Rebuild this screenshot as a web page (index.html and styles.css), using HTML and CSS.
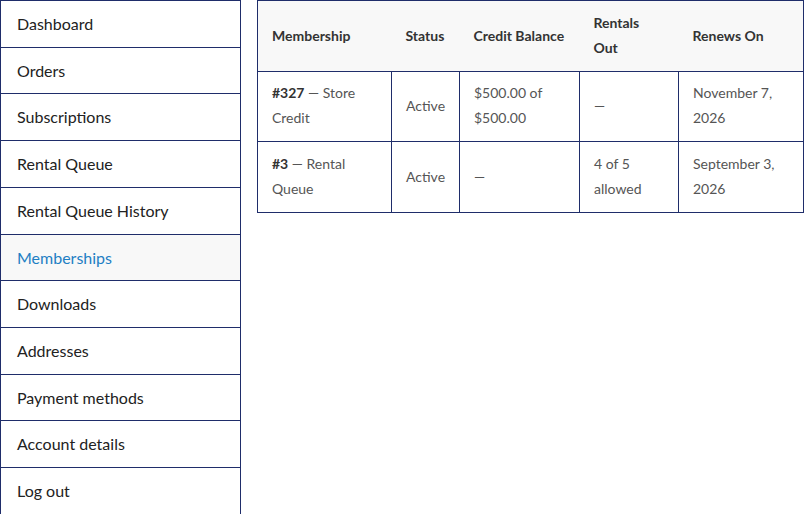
FILE: index.html
```html
<!DOCTYPE html>
<html>
<head>
<meta charset="utf-8">
<link rel="stylesheet" href="styles.css">
</head>
<body>
<div class="account">
  <nav class="nav">
    <ul class="nav-list">
      <li class="nav-item"><a href="#">Dashboard</a></li>
      <li class="nav-item"><a href="#">Orders</a></li>
      <li class="nav-item"><a href="#">Subscriptions</a></li>
      <li class="nav-item"><a href="#">Rental Queue</a></li>
      <li class="nav-item"><a href="#">Rental Queue History</a></li>
      <li class="nav-item is-active"><a href="#">Memberships</a></li>
      <li class="nav-item"><a href="#">Downloads</a></li>
      <li class="nav-item"><a href="#">Addresses</a></li>
      <li class="nav-item"><a href="#">Payment methods</a></li>
      <li class="nav-item"><a href="#">Account details</a></li>
      <li class="nav-item"><a href="#">Log out</a></li>
    </ul>
  </nav>
  <main class="content">
    <table class="members">
      <colgroup>
        <col class="c1"><col class="c2"><col class="c3"><col class="c4"><col class="c5">
      </colgroup>
      <thead>
        <tr>
          <th>Membership</th>
          <th>Status</th>
          <th>Credit Balance</th>
          <th>Rentals Out</th>
          <th>Renews On</th>
        </tr>
      </thead>
      <tbody>
        <tr>
          <td><strong>#327</strong> — Store Credit</td>
          <td>Active</td>
          <td>$500.00 of $500.00</td>
          <td>—</td>
          <td>November 7, 2026</td>
        </tr>
        <tr class="last-row">
          <td><strong>#3</strong> — Rental Queue</td>
          <td>Active</td>
          <td>—</td>
          <td>4 of 5 allowed</td>
          <td>September 3, 2026</td>
        </tr>
      </tbody>
    </table>
  </main>
</div>
</body>
</html>
```
FILE: styles.css
```css
html, body {
  margin: 0;
  padding: 0;
  background: #fff;
}
body {
  font-family: Lato, "Liberation Sans", sans-serif;
  color: #333;
}
.account {
  display: flex;
  align-items: flex-start;
  gap: 16px;
}
.nav {
  width: 241px;
  flex: none;
}
.nav-list {
  list-style: none;
  margin: 0;
  padding: 0;
  border-left: 1px solid #1f2d6a;
  border-right: 1px solid #1f2d6a;
}
.nav-item {
  border-top: 1px solid #1f2d6a;
}
.nav-item a {
  display: block;
  padding: 12px 16px 12px 16px;
  line-height: 21.7px;
  font-size: 16px;
  color: #222;
  text-decoration: none;
}
.nav-item.is-active a {
  background: #f8f8f8;
  color: #1f7fc4;
}
.content {
  flex: none;
}
.members {
  width: 547px;
  table-layout: fixed;
  border-collapse: collapse;
  border: 1px solid #1f2d6a;
  font-size: 14px;
  line-height: 25px;
}
.c1 { width: 134px; }
.c2 { width: 68px; }
.c3 { width: 120px; }
.c4 { width: 99px; }
.c5 { width: 125px; }
.members th {
  background: #f8f8f8;
  text-align: left;
  font-weight: 700;
  color: #333;
  padding: 9px 14px 11px;
  height: 50px;
}
.members td {
  border: 1px solid #1f2d6a;
  padding: 8px 14px 11px;
  color: #555;
  vertical-align: middle;
}
.members .last-row td {
  padding-top: 9px;
}
.members td strong {
  color: #333;
}
```
